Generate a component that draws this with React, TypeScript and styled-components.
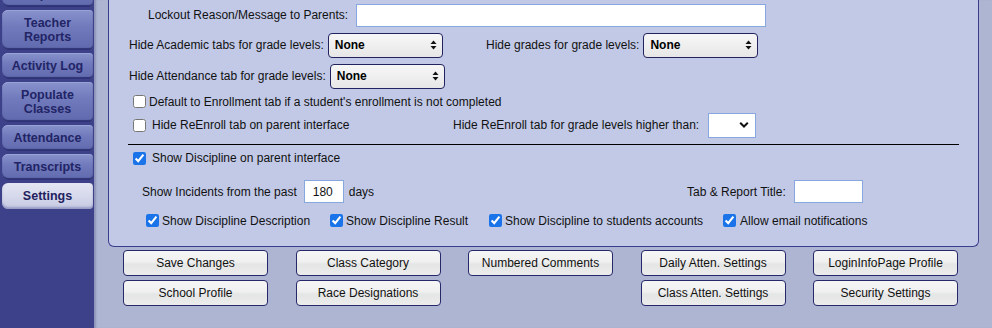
import styled, { createGlobalStyle } from "styled-components";

const GlobalStyle = createGlobalStyle`
  html, body {
    margin: 0;
    padding: 0;
    height: 100%;
    overflow: hidden;
  }
  #root {
    height: 100%;
  }
`;

const tabs = [
  { label: "Class Reports", double: true },
  { label: "Teacher Reports", double: true },
  { label: "Activity Log" },
  { label: "Populate Classes", double: true },
  { label: "Attendance" },
  { label: "Transcripts" },
  { label: "Settings", active: true },
];

function UpDownIcon() {
  return (
    <svg width="7" height="10" viewBox="0 0 7 10">
      <path d="M3.5 0.5 L6.5 4 L0.5 4 Z" fill="#111" />
      <path d="M3.5 9.5 L6.5 6 L0.5 6 Z" fill="#111" />
    </svg>
  );
}

function ChevronIcon() {
  return (
    <svg width="10" height="7" viewBox="0 0 10 7">
      <path
        d="M1.2 1.3 L5 5 L8.8 1.3"
        fill="none"
        stroke="#111"
        strokeWidth="2"
      />
    </svg>
  );
}

function GradeSelect() {
  return (
    <SelectWrap>
      <Select defaultValue="None">
        <option>None</option>
      </Select>
      <SelectIcon>
        <UpDownIcon />
      </SelectIcon>
    </SelectWrap>
  );
}

function App() {
  return (
    <>
      <GlobalStyle />
      <Page>
        <Sidebar>
          <TabList>
            {tabs.map((t) => (
              <Tab key={t.label} $double={t.double} $active={t.active}>
                {t.label}
              </Tab>
            ))}
          </TabList>
        </Sidebar>
        <Main>
          <Panel>
            <Row $h={30} $pl={39}>
              <Label>Lockout Reason/Message to Parents:</Label>
              <TextInput $w={410} $ml={8} />
            </Row>
            <Row $h={30} $pl={20}>
              <Group $w={357}>
                <Label>Hide Academic tabs for grade levels:</Label>
                <GradeSelect />
              </Group>
              <Label>Hide grades for grade levels:</Label>
              <GradeSelect />
            </Row>
            <Row $h={32} $pl={20}>
              <Label>Hide Attendance tab for grade levels:</Label>
              <GradeSelect />
            </Row>
            <Row $h={19} $pl={24}>
              <Check type="checkbox" />
              <Label $ml={3}>
                Default to Enrollment tab if a student's enrollment is not
                completed
              </Label>
            </Row>
            <Row $h={28} $pl={24}>
              <Group $w={320}>
                <Check type="checkbox" />
                <Label $ml={6}>Hide ReEnroll tab on parent interface</Label>
              </Group>
              <Label>Hide ReEnroll tab for grade levels higher than:</Label>
              <SelectWrap $ml={9}>
                <PlainSelect defaultValue="">
                  <option value=""></option>
                </PlainSelect>
                <SelectIcon $right={7}>
                  <ChevronIcon />
                </SelectIcon>
              </SelectWrap>
            </Row>
            <Rule />
            <Row $h={26} $pl={24}>
              <Check type="checkbox" defaultChecked />
              <Label $ml={6}>Show Discipline on parent interface</Label>
            </Row>
            <Row $h={41} $pl={33}>
              <Group $w={545}>
                <Label>Show Incidents from the past</Label>
                <TextInput $w={40} $ml={7} defaultValue="180" $pad={8} />
                <Label $ml={5}>days</Label>
              </Group>
              <Label>Tab &amp; Report Title:</Label>
              <TextInput $w={69} $ml={8} />
            </Row>
            <Row $h={17} $pl={37}>
              <Group $w={184}>
                <Check type="checkbox" defaultChecked />
                <Label $ml={3}>Show Discipline Description</Label>
              </Group>
              <Group $w={159}>
                <Check type="checkbox" defaultChecked />
                <Label $ml={3}>Show Discipline Result</Label>
              </Group>
              <Group $w={234}>
                <Check type="checkbox" defaultChecked />
                <Label $ml={3}>Show Discipline to students accounts</Label>
              </Group>
              <Group>
                <Check type="checkbox" defaultChecked />
                <Label $ml={4}>Allow email notifications</Label>
              </Group>
            </Row>
          </Panel>
          <ButtonGrid>
            <Button>Save Changes</Button>
            <Button>Class Category</Button>
            <Button>Numbered Comments</Button>
            <Button>Daily Atten. Settings</Button>
            <Button>LoginInfoPage Profile</Button>
            <Button>School Profile</Button>
            <Button>Race Designations</Button>
            <Spacer />
            <Button>Class Atten. Settings</Button>
            <Button>Security Settings</Button>
          </ButtonGrid>
        </Main>
      </Page>
    </>
  );
}

export default App;

const Page = styled.div`
  display: flex;
  height: 100%;
  font-family: "Liberation Sans", Arial, sans-serif;
`;

const Sidebar = styled.nav`
  width: 94px;
  flex-shrink: 0;
  background: #3d418a;
  overflow: hidden;
  padding-left: 2px;
  box-sizing: border-box;
`;

const TabList = styled.div`
  display: flex;
  flex-direction: column;
  gap: 3px;
  margin-top: -33px;
`;

const Tab = styled.div<{ $double?: boolean; $active?: boolean }>`
  width: 91px;
  height: ${(p) => (p.$double ? 40 : 26)}px;
  box-sizing: border-box;
  display: flex;
  align-items: center;
  justify-content: center;
  text-align: center;
  padding: 0 6px;
  line-height: 14px;
  font-size: 12.5px;
  font-weight: bold;
  color: ${(p) => (p.$active ? "#22225e" : "#222466")};
  border-radius: 6px 4px 4px 6px;
  background: ${(p) =>
    p.$active
      ? "linear-gradient(to bottom, #e4e6f2 0%, #d5d8eb 55%, #c5c9e1 100%)"
      : "linear-gradient(to bottom, #8892cc 0%, #6f79bb 45%, #5f69ad 100%)"};
  box-shadow: ${(p) =>
    p.$active
      ? "inset 0 -2px 2px rgba(120, 126, 180, 0.6)"
      : "inset 0 -2px 1px #2f3375, inset 0 1px 0 #9aa3d6"};
`;

const Main = styled.main`
  flex: 1;
  background: #adb5d3;
  padding-left: 14px;
  box-shadow: inset 3px 0 2px -1px #8d93b8;
`;

const Panel = styled.section`
  width: 871px;
  box-sizing: border-box;
  background: #c1c9e7;
  border: 1px solid #3a3c8c;
  border-top: none;
  border-radius: 0 0 6px 6px;
  padding-bottom: 17px;
  color: #111;
  font-size: 12px;
`;

const Row = styled.div<{ $h: number; $pl: number }>`
  display: flex;
  align-items: center;
  height: ${(p) => p.$h}px;
  padding-left: ${(p) => p.$pl}px;
  white-space: nowrap;
`;

const Group = styled.div<{ $w?: number }>`
  display: flex;
  align-items: center;
  ${(p) => (p.$w ? `width: ${p.$w}px; flex-shrink: 0;` : "")}
`;

const Label = styled.span<{ $ml?: number }>`
  margin-left: ${(p) => p.$ml ?? 0}px;
`;

const TextInput = styled.input<{ $w: number; $ml?: number; $pad?: number }>`
  width: ${(p) => p.$w}px;
  height: 23px;
  box-sizing: border-box;
  margin-left: ${(p) => p.$ml ?? 0}px;
  border: 1px solid #86a8de;
  background: #fff;
  padding: 0 ${(p) => p.$pad ?? 4}px;
  font-family: "Liberation Sans", Arial, sans-serif;
  font-size: 12px;
  color: #111;
  outline: none;
`;

const SelectWrap = styled.div<{ $ml?: number }>`
  position: relative;
  display: flex;
  margin-left: ${(p) => p.$ml ?? 4}px;
`;

const Select = styled.select`
  appearance: none;
  width: 115px;
  height: 25px;
  box-sizing: border-box;
  border: 1px solid #22235e;
  border-radius: 4px;
  background: linear-gradient(to bottom, #f6f6f6 0%, #efefef 50%, #e6e6e6 100%);
  padding: 0 6px;
  font-family: "Liberation Sans", Arial, sans-serif;
  font-size: 12px;
  font-weight: bold;
  color: #000;
  outline: none;
`;

const PlainSelect = styled.select`
  appearance: none;
  width: 48px;
  height: 25px;
  box-sizing: border-box;
  border: 1px solid #86a8de;
  border-radius: 0;
  background: #fff;
  outline: none;
`;

const SelectIcon = styled.span<{ $right?: number }>`
  position: absolute;
  right: ${(p) => p.$right ?? 6}px;
  top: 50%;
  transform: translateY(-50%);
  display: flex;
  pointer-events: none;
`;

const Check = styled.input`
  width: 13px;
  height: 13px;
  margin: 0;
  flex-shrink: 0;
  accent-color: #1a73e8;
`;

const Rule = styled.hr`
  margin: 5px 19px 0 19px;
  border: none;
  border-top: 1px solid #000;
  height: 0;
`;

const ButtonGrid = styled.div`
  display: grid;
  grid-template-columns: repeat(5, 145px);
  column-gap: 27.5px;
  row-gap: 4px;
  margin: 3px 0 0 15px;
`;

const Button = styled.button`
  height: 26px;
  box-sizing: border-box;
  border: 1px solid #27286a;
  border-radius: 4px;
  background: linear-gradient(to bottom, #f5f5f5 0%, #f0f0f0 45%, #e4e5e5 55%, #ececec 100%);
  font-family: "Liberation Sans", Arial, sans-serif;
  font-size: 12px;
  color: #111;
  padding: 0;
  cursor: pointer;
`;

const Spacer = styled.div``;
